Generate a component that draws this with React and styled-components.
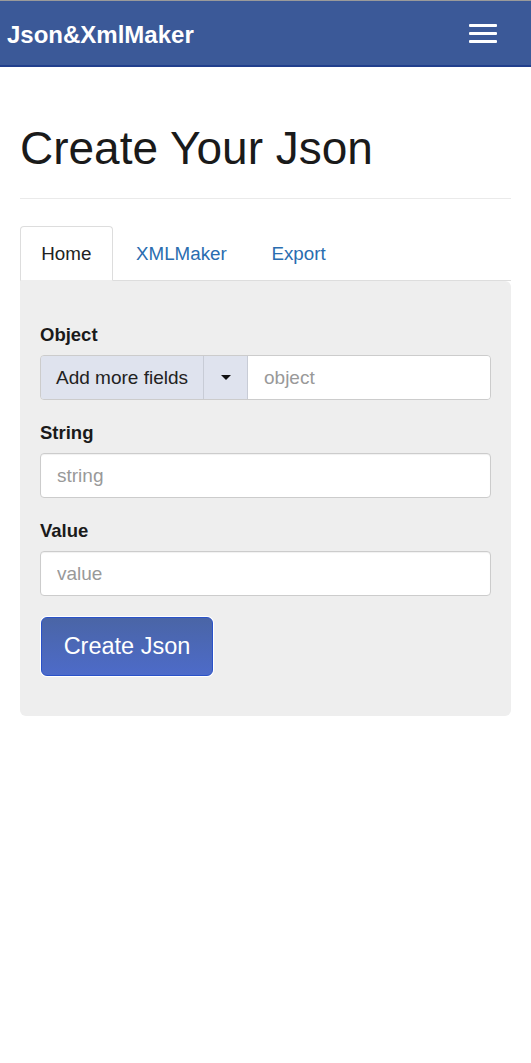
import React from 'react'
import styled, { createGlobalStyle } from 'styled-components';

const Global = createGlobalStyle`
  body {
    margin: 0;
    background: #fff;
    font-family: "Liberation Sans", Arial, sans-serif;
    color: #222;
  }
  * { box-sizing: border-box; }
`;

const Navbar = styled.nav`
  display: flex;
  justify-content: space-between;
  align-items: center;
  height: 67px;
  padding: 0 34px 0 7px;
  background: #3b5998;
  border-top: 1px solid #9a9a9a;
  border-bottom: 2px solid #213f8c;
`;

const Brand = styled.div`
  color: #fff;
  font-size: 24px;
  font-weight: 700;
  padding-top: 4px;
`;

const Burger = styled.div`
  display: flex;
  flex-direction: column;
  gap: 5px;
`;

const Bar = styled.span`
  display: block;
  width: 28px;
  height: 3px;
  border-radius: 1px;
  background: #fff;
`;

const Main = styled.main`
  padding: 0 20px;
`;

const Title = styled.h1`
  margin: 0;
  padding: 53px 0 22px;
  font-size: 46px;
  font-weight: 400;
  line-height: 56px;
  color: #1a1a1a;
  border-bottom: 1px solid #eaeaea;
`;

const Tabs = styled.div`
  display: flex;
  margin-top: 27px;
  border-bottom: 1px solid #ddd;
`;

const Tab = styled.div`
  height: 55px;
  padding: 0 20.3px;
  display: flex;
  align-items: center;
  font-size: 18.8px;
  margin-bottom: -1px;
  border: 1px solid ${p => (p.$active ? '#ddd' : 'transparent')};
  border-bottom-color: ${p => (p.$active ? '#eee' : 'transparent')};
  border-radius: 4px 4px 0 0;
  background: ${p => (p.$active ? '#fff' : 'transparent')};
  color: ${p => (p.$active ? '#222' : '#2a6db0')};
  margin-right: 2px;
`;

const Panel = styled.div`
  background: #eee;
  border-radius: 0 6px 6px 6px;
  padding: 21px 20px 40px;
`;

const Label = styled.div`
  font-size: 18.5px;
  line-height: 22px;
  font-weight: 700;
  color: #1a1a1a;
  margin: 22px 0 9px;
  &:first-child { margin-top: 22px; }
`;

const Group = styled.div`
  display: flex;
  height: 45px;
  border: 1px solid #ccc;
  border-radius: 4px;
  overflow: hidden;
  box-shadow: inset 0 1px 1px rgba(0,0,0,0.06);
`;

const AddonBtn = styled.div`
  display: flex;
  flex-shrink: 0;
  align-items: center;
  justify-content: center;
  white-space: nowrap;
  background: #dfe3ee;
  color: #222;
  font-size: 19px;
  padding: 0;
  width: ${p => (p.$caret ? '44px' : '163px')};
  border-right: 1px solid #c8ccd6;
`;

const Caret = styled.span`
  width: 0;
  height: 0;
  border-left: 5px solid transparent;
  border-right: 5px solid transparent;
  border-top: 5px solid #111;
`;

const Input = styled.input`
  flex: 1;
  min-width: 0;
  border: none;
  outline: none;
  padding: 0 16px;
  font-family: inherit;
  font-size: 19px;
  color: #333;
  background: #fff;
  &::placeholder { color: #999; }
`;

const Field = styled(Input)`
  display: block;
  width: 100%;
  height: 45px;
  border: 1px solid #ccc;
  border-radius: 4px;
  box-shadow: inset 0 1px 1px rgba(0,0,0,0.06);
`;

const Submit = styled.button`
  margin-top: 21px;
  margin-left: 1px;
  width: 172px;
  height: 59px;
  border: 1px solid #2a52c8;
  border-radius: 6px;
  background: linear-gradient(#4a65a6, #4d6bc9);
  color: #fff;
  font-family: inherit;
  font-size: 23.5px;
  box-shadow: 0 0 0 1px #fff;
`;

const App = () => {
  return (
    <>
      <Global />
      <Navbar>
        <Brand>Json&amp;XmlMaker</Brand>
        <Burger>
          <Bar />
          <Bar />
          <Bar />
        </Burger>
      </Navbar>
      <Main>
        <Title>Create Your Json</Title>
        <Tabs>
          <Tab $active>Home</Tab>
          <Tab>XMLMaker</Tab>
          <Tab>Export</Tab>
        </Tabs>
        <Panel>
          <Label>Object</Label>
          <Group>
            <AddonBtn>Add more fields</AddonBtn>
            <AddonBtn $caret><Caret /></AddonBtn>
            <Input placeholder="object" />
          </Group>
          <Label>String</Label>
          <Field placeholder="string" />
          <Label>Value</Label>
          <Field placeholder="value" />
          <Submit>Create Json</Submit>
        </Panel>
      </Main>
    </>
  )
}

export default App
